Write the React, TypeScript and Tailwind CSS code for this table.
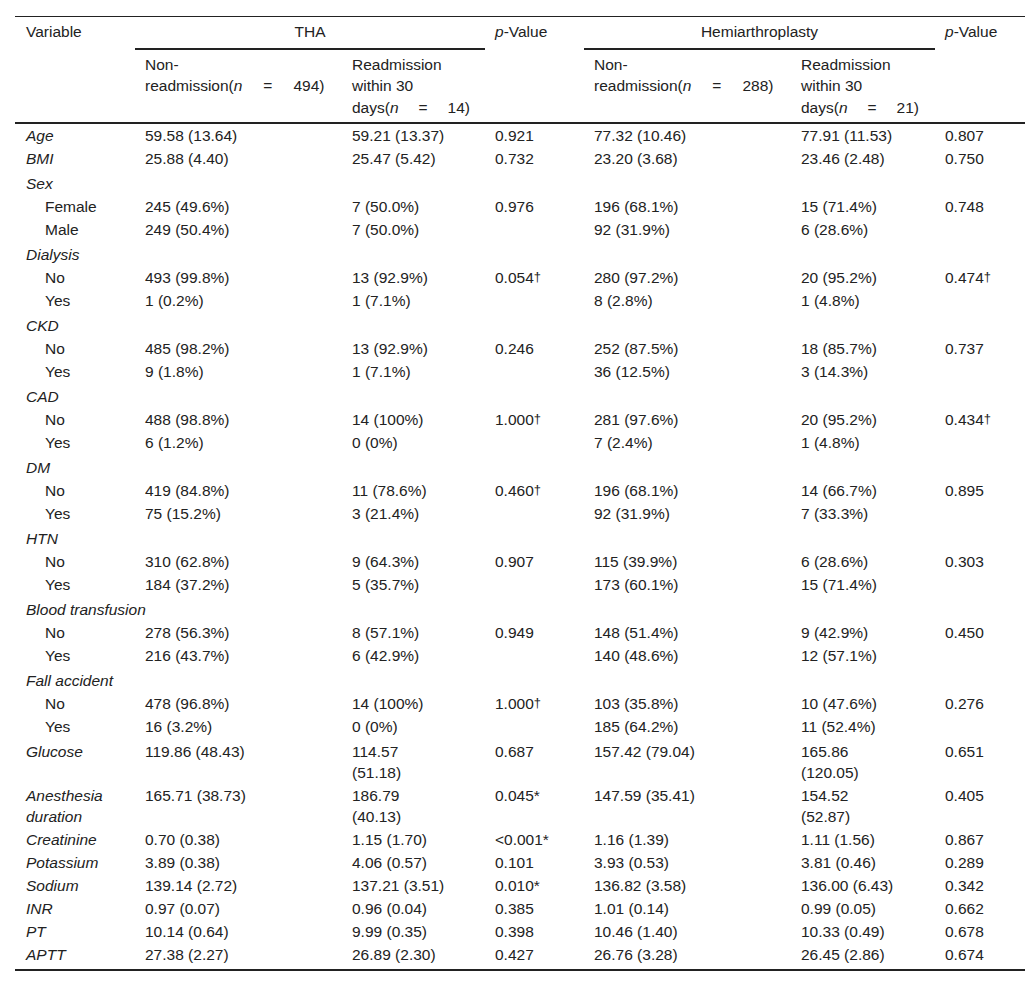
import React from 'react';

type Row = {
  label: string;
  sub?: boolean;
  group?: boolean;
  gap?: boolean;
  cells?: React.ReactNode[];
};

const dag = <sup className="text-[13px] leading-none relative -top-[2px]">†</sup>;

const rows: Row[] = [
  { label: 'Age', cells: ['59.58 (13.64)', '59.21 (13.37)', '0.921', '77.32 (10.46)', '77.91 (11.53)', '0.807'] },
  { label: 'BMI', cells: ['25.88 (4.40)', '25.47 (5.42)', '0.732', '23.20 (3.68)', '23.46 (2.48)', '0.750'] },
  { label: 'Sex', group: true },
  { label: 'Female', sub: true, cells: ['245 (49.6%)', '7 (50.0%)', '0.976', '196 (68.1%)', '15 (71.4%)', '0.748'] },
  { label: 'Male', sub: true, cells: ['249 (50.4%)', '7 (50.0%)', '', '92 (31.9%)', '6 (28.6%)', ''] },
  { label: 'Dialysis', group: true },
  { label: 'No', sub: true, cells: ['493 (99.8%)', '13 (92.9%)', <>0.054{dag}</>, '280 (97.2%)', '20 (95.2%)', <>0.474{dag}</>] },
  { label: 'Yes', sub: true, cells: ['1 (0.2%)', '1 (7.1%)', '', '8 (2.8%)', '1 (4.8%)', ''] },
  { label: 'CKD', group: true },
  { label: 'No', sub: true, cells: ['485 (98.2%)', '13 (92.9%)', '0.246', '252 (87.5%)', '18 (85.7%)', '0.737'] },
  { label: 'Yes', sub: true, cells: ['9 (1.8%)', '1 (7.1%)', '', '36 (12.5%)', '3 (14.3%)', ''] },
  { label: 'CAD', group: true },
  { label: 'No', sub: true, cells: ['488 (98.8%)', '14 (100%)', <>1.000{dag}</>, '281 (97.6%)', '20 (95.2%)', <>0.434{dag}</>] },
  { label: 'Yes', sub: true, cells: ['6 (1.2%)', '0 (0%)', '', '7 (2.4%)', '1 (4.8%)', ''] },
  { label: 'DM', group: true },
  { label: 'No', sub: true, cells: ['419 (84.8%)', '11 (78.6%)', <>0.460{dag}</>, '196 (68.1%)', '14 (66.7%)', '0.895'] },
  { label: 'Yes', sub: true, cells: ['75 (15.2%)', '3 (21.4%)', '', '92 (31.9%)', '7 (33.3%)', ''] },
  { label: 'HTN', group: true },
  { label: 'No', sub: true, cells: ['310 (62.8%)', '9 (64.3%)', '0.907', '115 (39.9%)', '6 (28.6%)', '0.303'] },
  { label: 'Yes', sub: true, cells: ['184 (37.2%)', '5 (35.7%)', '', '173 (60.1%)', '15 (71.4%)', ''] },
  { label: 'Blood transfusion', group: true },
  { label: 'No', sub: true, cells: ['278 (56.3%)', '8 (57.1%)', '0.949', '148 (51.4%)', '9 (42.9%)', '0.450'] },
  { label: 'Yes', sub: true, cells: ['216 (43.7%)', '6 (42.9%)', '', '140 (48.6%)', '12 (57.1%)', ''] },
  { label: 'Fall accident', group: true },
  { label: 'No', sub: true, cells: ['478 (96.8%)', '14 (100%)', <>1.000{dag}</>, '103 (35.8%)', '10 (47.6%)', '0.276'] },
  { label: 'Yes', sub: true, cells: ['16 (3.2%)', '0 (0%)', '', '185 (64.2%)', '11 (52.4%)', ''] },
  { label: 'Glucose', gap: true, cells: ['119.86 (48.43)', <>114.57<br />(51.18)</>, '0.687', '157.42 (79.04)', <>165.86<br />(120.05)</>, '0.651'] },
  { label: 'Anesthesia\nduration', cells: ['165.71 (38.73)', <>186.79<br />(40.13)</>, '0.045*', '147.59 (35.41)', <>154.52<br />(52.87)</>, '0.405'] },
  { label: 'Creatinine', cells: ['0.70 (0.38)', '1.15 (1.70)', '<0.001*', '1.16 (1.39)', '1.11 (1.56)', '0.867'] },
  { label: 'Potassium', cells: ['3.89 (0.38)', '4.06 (0.57)', '0.101', '3.93 (0.53)', '3.81 (0.46)', '0.289'] },
  { label: 'Sodium', cells: ['139.14 (2.72)', '137.21 (3.51)', '0.010*', '136.82 (3.58)', '136.00 (6.43)', '0.342'] },
  { label: 'INR', cells: ['0.97 (0.07)', '0.96 (0.04)', '0.385', '1.01 (0.14)', '0.99 (0.05)', '0.662'] },
  { label: 'PT', cells: ['10.14 (0.64)', '9.99 (0.35)', '0.398', '10.46 (1.40)', '10.33 (0.49)', '0.678'] },
  { label: 'APTT', cells: ['27.38 (2.27)', '26.89 (2.30)', '0.427', '26.76 (3.28)', '26.45 (2.86)', '0.674'] },
];

// wide spacing around "=" as in the source table
function N({ count, wide }: { count: string; wide?: boolean }) {
  return (
    <>
      (<i>n</i>
      <span className={wide ? 'px-[21px]' : 'px-[20px]'}>=</span>
      {count})
    </>
  );
}

export default function App() {
  const last = rows.length - 1;
  return (
    <div className="bg-white min-h-[987px] pt-[16px] text-[#222] text-[15.5px] leading-[21.5px]" style={{ fontFamily: '"Liberation Sans", Arial, sans-serif' }}>
      <table className="ml-[15px] w-[1010px] table-fixed border-collapse">
        <colgroup>
          <col className="w-[120px]" />
          <col className="w-[207px]" />
          <col className="w-[143px]" />
          <col className="w-[99px]" />
          <col className="w-[206px]" />
          <col className="w-[145px]" />
          <col className="w-[90px]" />
        </colgroup>
        <thead className="border-t border-[#222]">
          <tr>
            <th rowSpan={2} className="align-top text-left font-normal pl-[11px] pt-[4px]">Variable</th>
            <th colSpan={2} className="text-center font-normal pt-[4px] pb-[5px] border-b-2 border-[#222]">THA</th>
            <th rowSpan={2} className="align-top text-left font-normal pl-[10px] pt-[4px]"><i>p</i>-Value</th>
            <th colSpan={2} className="text-center font-normal pt-[4px] pb-[5px] border-b-2 border-[#222]">Hemiarthroplasty</th>
            <th rowSpan={2} className="align-top text-left font-normal pl-[10px] pt-[4px]"><i>p</i>-Value</th>
          </tr>
          <tr className="border-b-2 border-[#222]">
            <th className="align-top text-left font-normal pl-[10px] pt-[4px] pb-[4px] whitespace-nowrap">
              Non-<br />readmission<N count="494" wide />
            </th>
            <th className="align-top text-left font-normal pl-[10px] pt-[4px] pb-[4px] whitespace-nowrap">
              Readmission<br />within 30<br />days<N count="14" />
            </th>
            <th className="align-top text-left font-normal pl-[10px] pt-[4px] pb-[4px] whitespace-nowrap">
              Non-<br />readmission<N count="288" wide />
            </th>
            <th className="align-top text-left font-normal pl-[11px] pt-[4px] pb-[4px] whitespace-nowrap">
              Readmission<br />within 30<br />days<N count="21" />
            </th>
          </tr>
        </thead>
        <tbody className="border-b-2 border-[#222] leading-[21px]">
          {rows.map((r, i) => {
            const pt = r.gap ? 'pt-[3px]' : 'pt-[1px]';
            const pb = i === last ? 'pb-[4px]' : 'pb-[1px]';
            return (
              <tr key={i}>
                {r.group ? (
                  <td colSpan={7} className="italic pl-[11px] pt-[3px] pb-[1px] whitespace-nowrap">{r.label}</td>
                ) : (
                  <>
                    <td className={`${r.sub ? 'pl-[30px]' : 'pl-[11px] italic'} ${pt} ${pb} align-top whitespace-pre-line`}>{r.label}</td>
                    {r.cells!.map((c, j) => (
                      <td key={j} className={`${j === 4 ? 'pl-[11px]' : 'pl-[10px]'} ${pt} ${pb} align-top whitespace-nowrap`}>{c}</td>
                    ))}
                  </>
                )}
              </tr>
            );
          })}
        </tbody>
      </table>
    </div>
  );
}
